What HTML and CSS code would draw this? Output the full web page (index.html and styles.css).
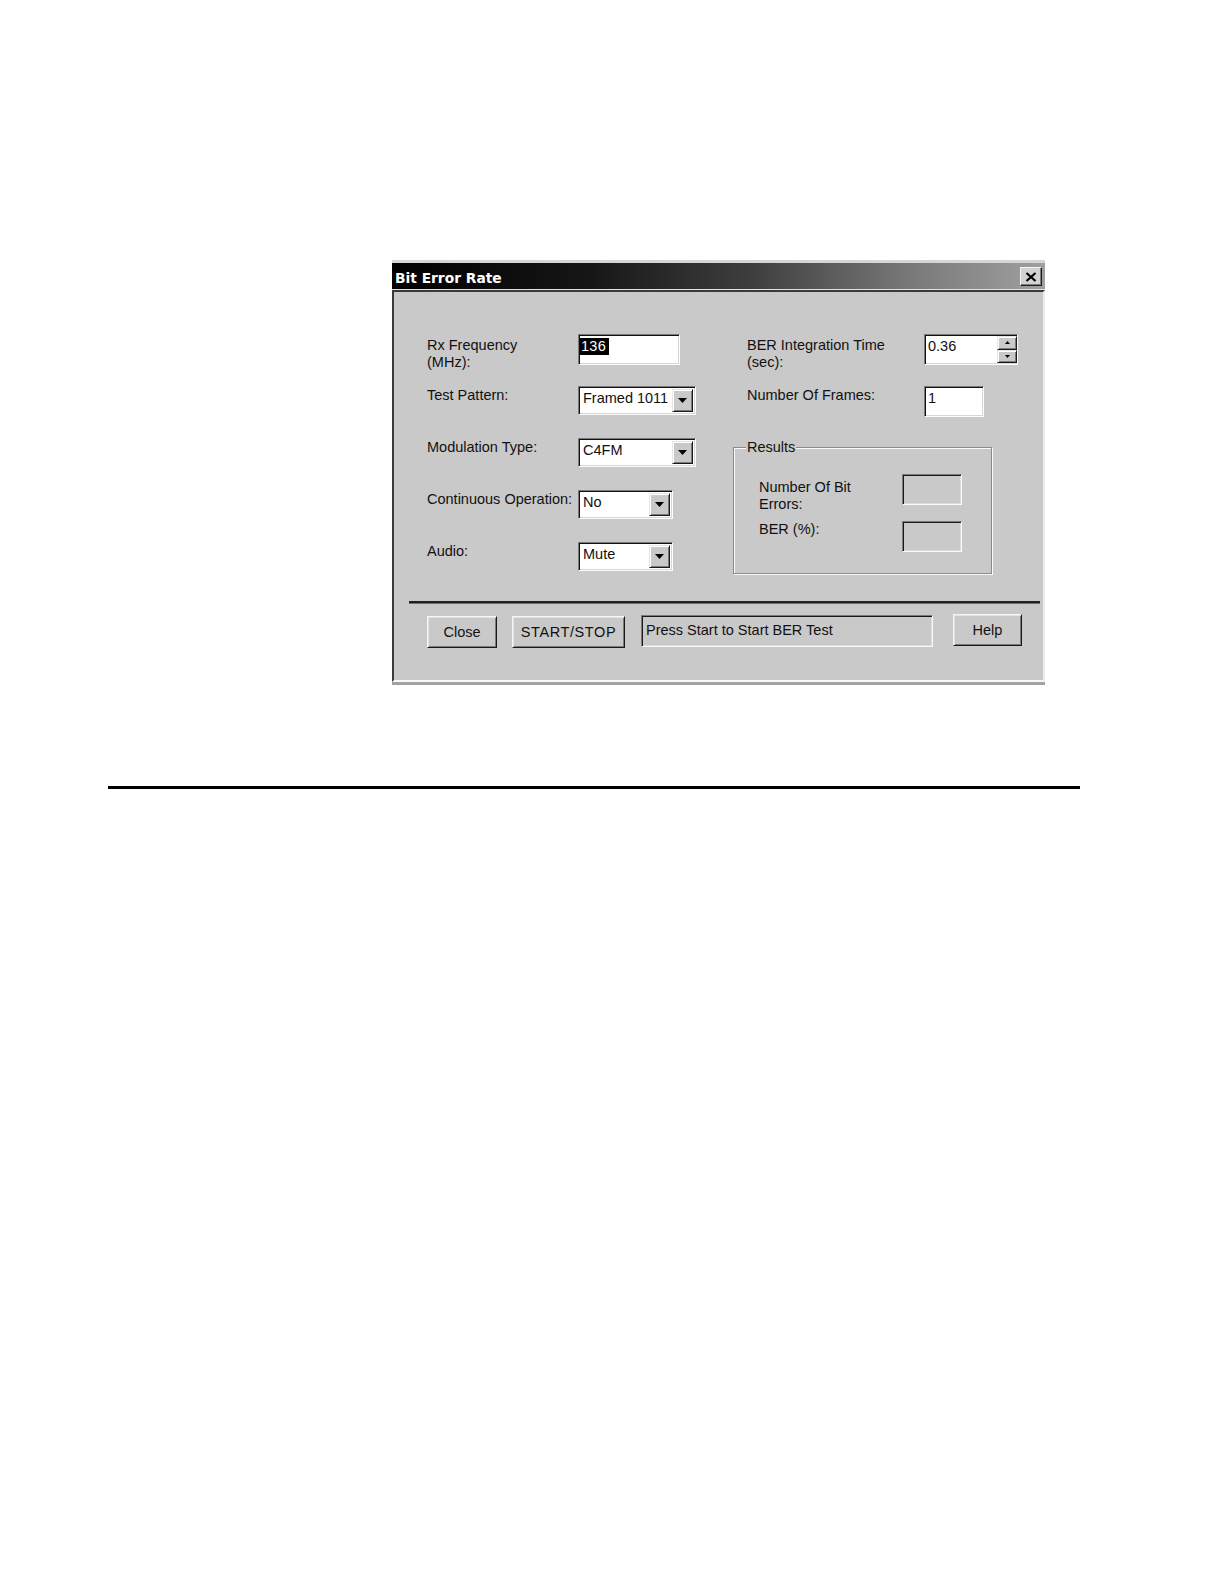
FILE: index.html
```html
<!DOCTYPE html>
<html lang="en">
<head>
<meta charset="utf-8">
<title>Bit Error Rate</title>
<link rel="stylesheet" href="styles.css">
</head>
<body>
<div class="page">
  <div class="dialog">
    <div class="titlebar">
      <span class="title">Bit Error Rate</span>
      <span class="xbtn"><svg width="12" height="10" viewBox="0 0 12 10"><path d="M1.5 1 L10.5 9 M10.5 1 L1.5 9" stroke="#000" stroke-width="2.3" fill="none"/></svg></span>
    </div>
    <div class="client">
      <div class="form">
        <div class="left">
          <div class="label top3">Rx Frequency<br>(MHz):</div>
          <div class="edit w102"><span class="sel">136</span></div>

          <div class="label top1">Test Pattern:</div>
          <div class="combo w118"><span class="val">Framed 1011</span><span class="drop"><svg width="9" height="5" viewBox="0 0 9 5"><path d="M0 0H9L4.5 5Z" fill="#000"/></svg></span></div>

          <div class="label top1">Modulation Type:</div>
          <div class="combo w118"><span class="val">C4FM</span><span class="drop"><svg width="9" height="5" viewBox="0 0 9 5"><path d="M0 0H9L4.5 5Z" fill="#000"/></svg></span></div>

          <div class="label top1">Continuous Operation:</div>
          <div class="combo w95"><span class="val">No</span><span class="drop"><svg width="9" height="5" viewBox="0 0 9 5"><path d="M0 0H9L4.5 5Z" fill="#000"/></svg></span></div>

          <div class="label top1">Audio:</div>
          <div class="combo w95"><span class="val">Mute</span><span class="drop"><svg width="9" height="5" viewBox="0 0 9 5"><path d="M0 0H9L4.5 5Z" fill="#000"/></svg></span></div>
        </div>

        <div class="right">
          <div class="row">
            <div class="label rlabel top3">BER Integration Time<br>(sec):</div>
            <div class="edit spin">
              <span class="val">0.36</span>
              <span class="spinbtns">
                <span class="sbtn"><svg width="5" height="3" viewBox="0 0 5 3"><path d="M0 3H5L2.5 0Z" fill="#000"/></svg></span>
                <span class="sbtn"><svg width="5" height="3" viewBox="0 0 5 3"><path d="M0 0H5L2.5 3Z" fill="#000"/></svg></span>
              </span>
            </div>
          </div>
          <div class="row">
            <div class="label rlabel top1">Number Of Frames:</div>
            <div class="edit w60"><span class="val">1</span></div>
          </div>
          <div class="group">
            <div class="legend">Results</div>
            <div class="ggrid">
              <div class="label top5">Number Of Bit<br>Errors:</div>
              <div class="out"></div>
              <div class="label">BER (%):</div>
              <div class="out"></div>
            </div>
          </div>
        </div>
      </div>

      <div class="sep"></div>

      <div class="buttons">
        <div class="btn b-close">Close</div>
        <div class="btn b-start">START/STOP</div>
        <div class="status">Press Start to Start BER Test</div>
        <div class="btn b-help">Help</div>
      </div>
    </div>
  </div>
  <hr class="rule">
</div>
</body>
</html>
```
FILE: styles.css
```css
* { box-sizing: border-box; }
html, body { margin: 0; padding: 0; background: #fff; }
body {
  font-family: "Liberation Sans", Arial, sans-serif;
  font-size: 14.5px;
  line-height: 17px;
  color: #111;
}
.page { padding-top: 260px; height: 1584px; }

.dialog {
  margin-left: 392px;
  width: 653px;
  border-top: 3px solid #d6d6d6;
  border-bottom: 3px solid #a2a2a2;
  background: #e2e2e2;
}
.titlebar {
  height: 26px;
  margin-bottom: 1px;
  display: flex;
  align-items: center;
  justify-content: space-between;
  padding: 0 3px 0 3px;
  background: linear-gradient(90deg, #000 0%, #161616 30%, #3e3e3e 55%, #7a7a7a 80%, #a0a0a0 100%);
}
.title {
  display: block;
  padding-top: 4px;
  font-family: "DejaVu Sans", "Liberation Sans", sans-serif;
  font-weight: bold;
  font-size: 13.8px;
  line-height: 16px;
  color: #fff;
}
.xbtn {
  width: 22px;
  height: 19px;
  margin-top: 1px;
  background: #d2d2d2;
  border: 1px solid;
  border-color: #f4f4f4 #1e1e1e #1e1e1e #f4f4f4;
  box-shadow: inset -1px -1px 0 #7c7c7c;
  display: flex;
  align-items: center;
  justify-content: center;
}

.client {
  background: #c9c9c9;
  border: 2px solid;
  border-color: #3a3a3a #ececec #f8f8f8 #3a3a3a;
  padding: 42px 0 32px 0;
}

.form { display: flex; align-items: flex-start; }
.left {
  margin-left: 33px;
  display: grid;
  grid-template-columns: 151px 118px;
  grid-auto-rows: 31px;
  row-gap: 21px;
  align-items: start;
}
.label { white-space: nowrap; }
.top1 { padding-top: 1px; }
.top3 { padding-top: 3px; }
.top5 { padding-top: 5px; }

.edit {
  height: 31px;
  background: #fff;
  border: 1px solid;
  border-color: #7a7a7a #fdfdfd #fdfdfd #7a7a7a;
  box-shadow: inset 1px 1px 0 #111, inset -1px -1px 0 #d6d6d6;
  padding: 3px 2px 0 1px;
  flex: none;
}
.w102 { width: 102px; }
.w60 { width: 60px; }
.w118 { width: 118px; }
.w95 { width: 95px; }
.edit .val { padding-left: 2px; }
.sel { display: inline-block; background: #000; color: #fff; padding: 0 3px 0 1px; letter-spacing: 0.3px; }

.combo {
  height: 29px;
  display: flex;
  background: #fff;
  border: 1px solid;
  border-color: #7a7a7a #fdfdfd #fdfdfd #7a7a7a;
  box-shadow: inset 1px 1px 0 #111, inset -1px -1px 0 #d6d6d6;
  padding: 2px;
}
.combo .val { flex: 1; padding: 1px 0 0 2px; white-space: nowrap; overflow: hidden; }
.drop, .sbtn {
  display: flex;
  align-items: center;
  justify-content: center;
  background: #c9c9c9;
  border: 1px solid;
  border-color: #e6e6e6 #1a1a1a #1a1a1a #e6e6e6;
  box-shadow: inset 1px 1px 0 #fff, inset -1px -1px 0 #7a7a7a;
}
.drop { width: 21px; flex: none; }

.right { margin-left: 37px; }
.row { display: flex; height: 31px; padding-left: 14px; }
.row + .row { margin-top: 21px; }
.rlabel { width: 177px; flex: none; }
.spin { width: 94px; display: flex; padding: 1px 0 1px 1px; }
.spin .val { flex: 1; padding-top: 2px; padding-left: 2px; }
.spinbtns { width: 20px; display: flex; flex-direction: column; }
.sbtn { flex: 1; }

.group {
  margin-top: 30px;
  width: 259px;
  height: 127px;
  border: 1px solid #8a8a8a;
  box-shadow: inset 1px 1px 0 #fafafa, 1px 1px 0 #fafafa;
}
.legend {
  width: fit-content;
  margin: -9px 0 0 12px;
  padding: 0 1px;
  background: #c9c9c9;
}
.ggrid {
  margin-top: 18px;
  padding-left: 25px;
  display: grid;
  grid-template-columns: 143px 60px;
  grid-template-rows: 47px 31px;
  align-items: start;
}
.out {
  height: 31px;
  background: #c9c9c9;
  border: 1px solid;
  border-color: #7a7a7a #fafafa #fafafa #7a7a7a;
  box-shadow: inset 1px 1px 0 #1a1a1a, inset -1px -1px 0 #dcdcdc;
}

.sep {
  margin: 27px 3px 0 15px;
  height: 3px;
  background: linear-gradient(#222 0 2px, #6e6e6e 2px);
}

.buttons {
  margin-top: 10px;
  padding-left: 33px;
  display: flex;
  align-items: flex-start;
}
.btn {
  height: 32px;
  display: flex;
  align-items: center;
  justify-content: center;
  background: #c9c9c9;
  border: 1px solid;
  border-color: #f6f6f6 #1a1a1a #1a1a1a #f6f6f6;
  box-shadow: inset 1px 1px 0 #e2e2e2, inset -1px -1px 0 #7a7a7a;
  white-space: nowrap;
}
.b-close { width: 70px; margin-top: 2px; }
.b-start { width: 113px; margin-top: 2px; margin-left: 15px; letter-spacing: 0.6px; }
.b-help { width: 69px; margin-left: 20px; }
.status {
  width: 292px;
  height: 32px;
  margin-top: 1px;
  margin-left: 16px;
  padding: 6px 0 0 4px;
  background: #c9c9c9;
  border: 1px solid;
  border-color: #7a7a7a #fafafa #fafafa #7a7a7a;
  box-shadow: inset 1px 1px 0 #1a1a1a, inset -1px -1px 0 #dcdcdc;
  white-space: nowrap;
}

.rule {
  margin: 101px 0 0 108px;
  width: 972px;
  height: 3px;
  border: 0;
  background: #000;
}
```
